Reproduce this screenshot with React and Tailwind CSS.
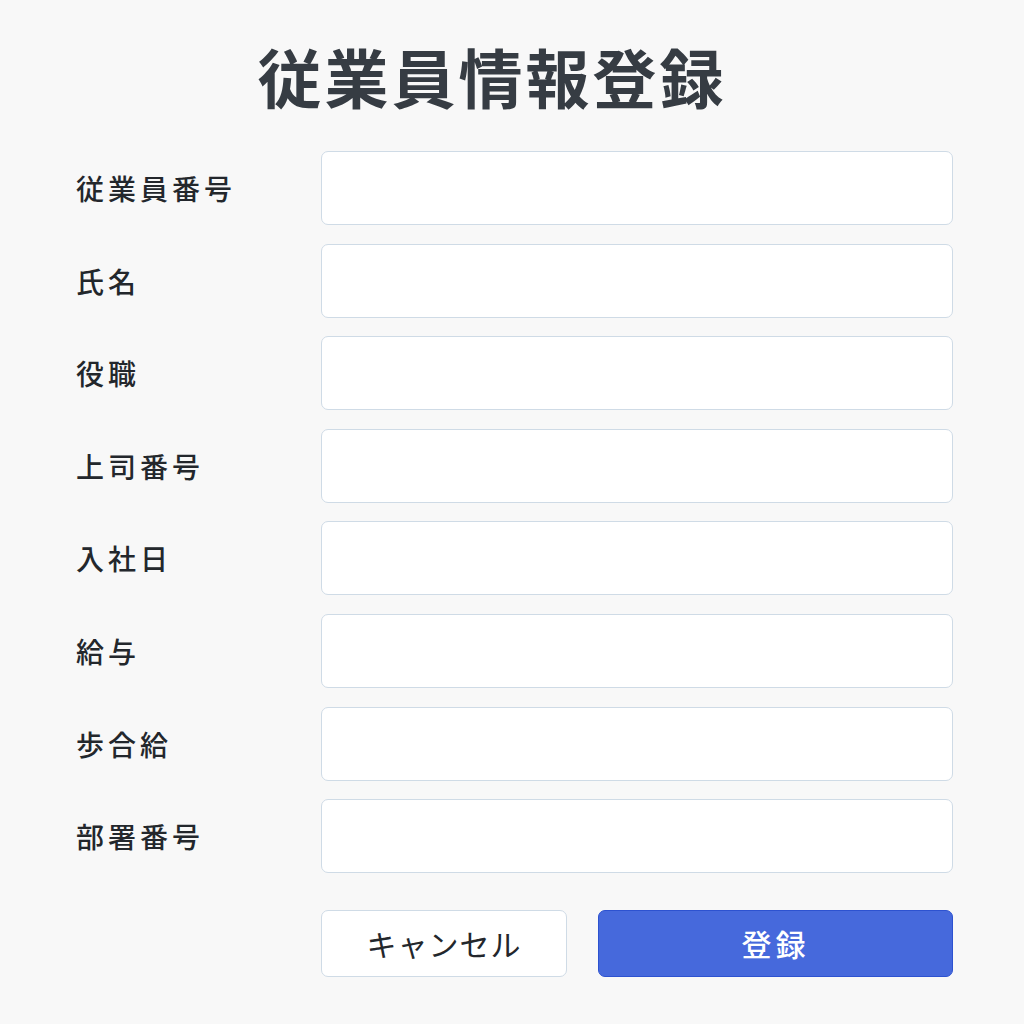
import React from 'react';

const fields = ['従業員番号', '氏名', '役職', '上司番号', '入社日', '給与', '歩合給', '部署番号'];

const App = () => {
  return (
    <div
      className="min-h-screen w-full bg-[#f8f8f8] pt-[38px]"
      style={{ fontFamily: '"Noto Sans CJK JP", "Noto Sans", sans-serif' }}
    >
      <h1 className="pr-[40px] text-center text-[64px] font-semibold leading-[74px] tracking-[3px] text-[#363c43]">
        従業員情報登録
      </h1>

      <form className="mt-[39px] flex flex-col gap-[18.6px] pl-[76px] pr-[71px]">
        {fields.map((label) => (
          <div key={label} className="flex items-center">
            <label className="w-[245px] text-[28px] font-medium tracking-[4px] text-[#23272c]">{label}</label>
            <input
              type="text"
              className="h-[74px] flex-1 rounded-[7px] border border-[#cfdbe6] bg-white px-4 outline-none"
            />
          </div>
        ))}

        <div className="mt-[18px] flex gap-[31px] pl-[245px]">
          <button
            type="button"
            className="h-[67px] w-[246px] rounded-[7px] border border-[#cfdbe6] bg-white text-[30px] tracking-[1px] text-[#23272c]"
          >
            キャンセル
          </button>
          <button
            type="button"
            className="h-[67px] flex-1 rounded-[7px] border border-[#2d52d0] bg-[#4669dc] text-[30px] font-medium tracking-[4px] text-white"
          >
            登録
          </button>
        </div>
      </form>
    </div>
  );
};

export default App;
